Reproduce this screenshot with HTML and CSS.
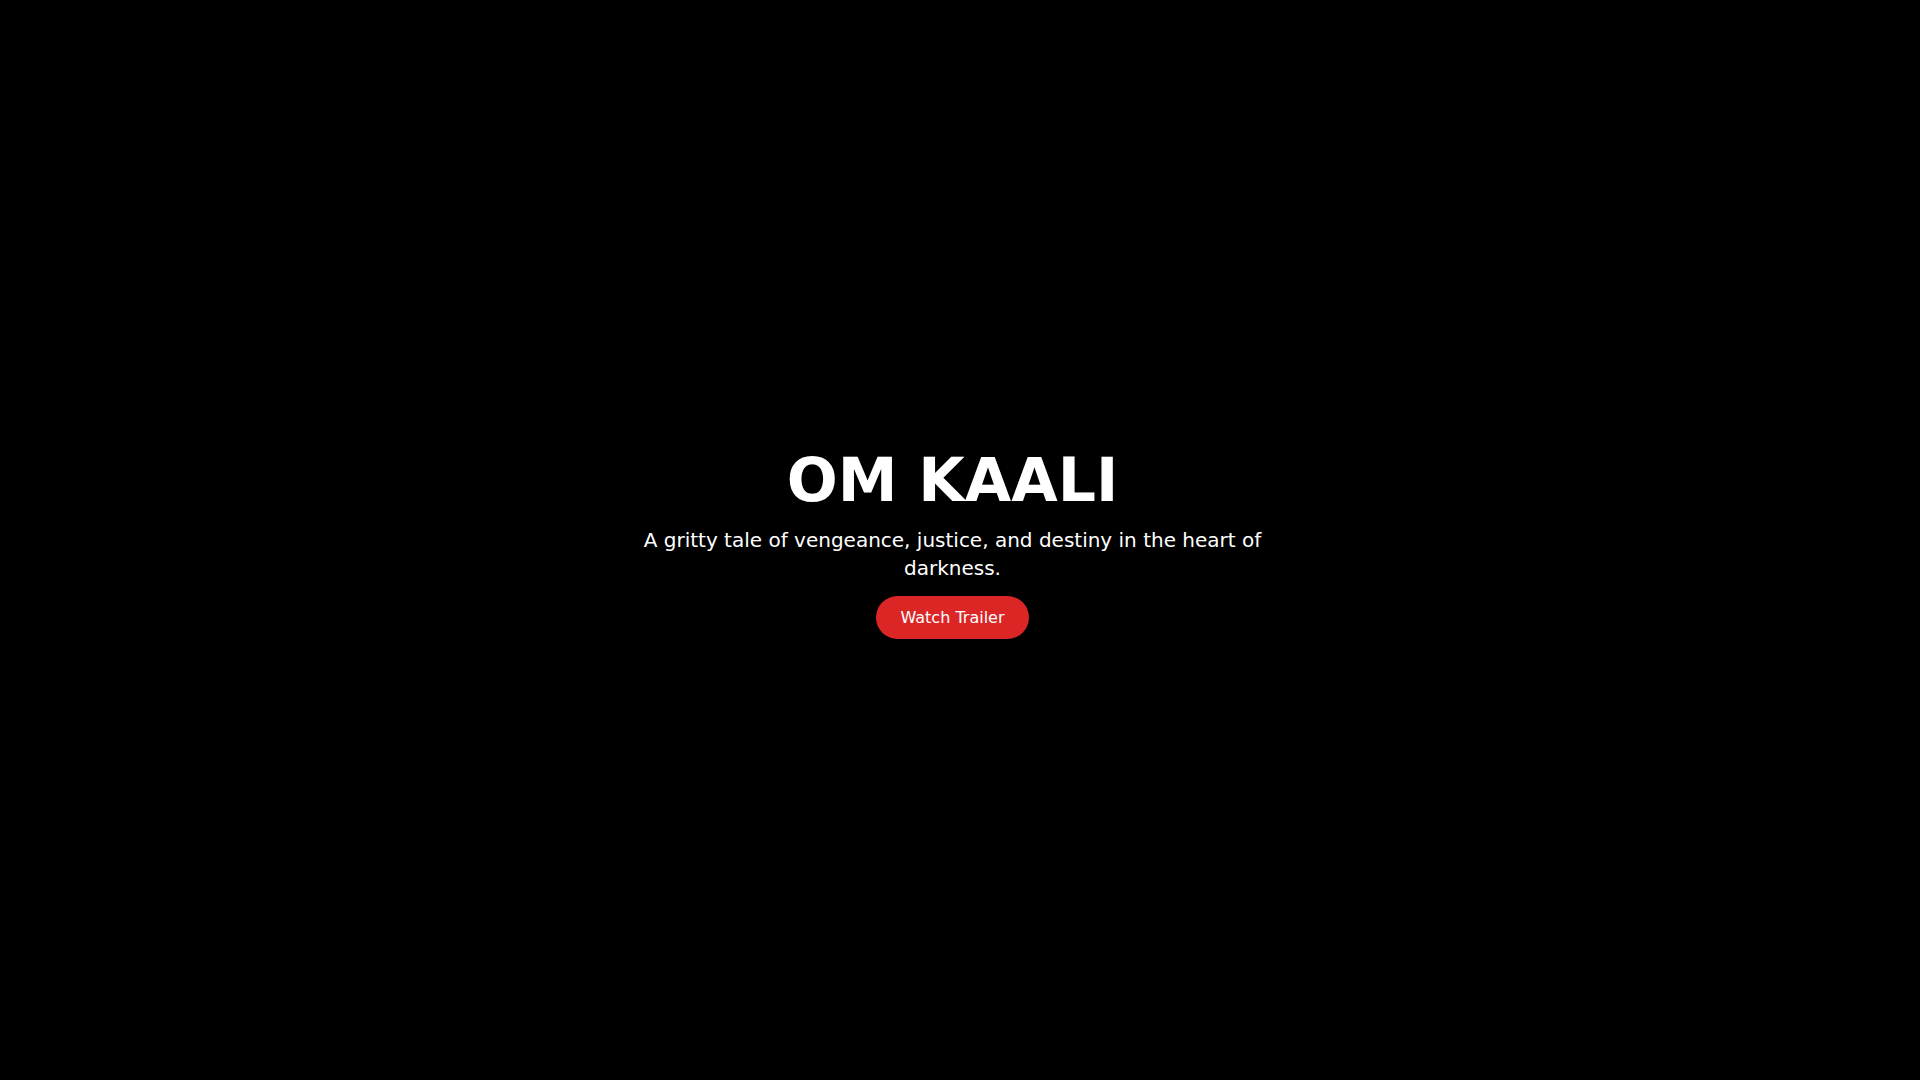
FILE: index.html
```html
<!DOCTYPE html>
<html>
<head>
    <link rel="stylesheet" href="styles.css">
</head>
<body>
    <!-- Hero -->
    <section class="hero">
        <h1 class="hero-title">OM KAALI</h1>
        <p class="hero-tagline">A gritty tale of vengeance, justice, and destiny in the heart of darkness.</p>
        <button class="btn-trailer">Watch Trailer</button>
    </section>

    <!-- Rest of the page (dark sections below the fold) -->
    <section class="page-section"></section>
    <section class="page-section"></section>
    <section class="page-section"></section>
    <section class="page-section"></section>
    <section class="page-section page-section-end"></section>
</body>
</html>
```
FILE: styles.css
```css
html, body {
    margin: 0;
    padding: 0;
    background: #000;
    color: #fff;
    font-family: "DejaVu Sans", sans-serif;
}

.hero {
    height: 100vh;
    display: flex;
    flex-direction: column;
    align-items: center;
    justify-content: center;
    text-align: center;
    padding: 8px 15px 0 0;
    box-sizing: border-box;
}

.hero-title {
    font-size: 60px;
    line-height: 1;
    font-weight: 700;
    margin: 0 0 16px;
}

.hero-tagline {
    font-size: 20px;
    line-height: 28px;
    max-width: 672px;
    margin: 0 0 14px;
}

.btn-trailer {
    font-family: "DejaVu Sans", sans-serif;
    font-size: 16px;
    color: #fff;
    background: #dc2626;
    border: none;
    border-radius: 9999px;
    padding: 12px 24px;
    cursor: pointer;
}

.page-section {
    height: 960px;
    background: #000;
}

.page-section-end {
    height: 990px;
}
```
